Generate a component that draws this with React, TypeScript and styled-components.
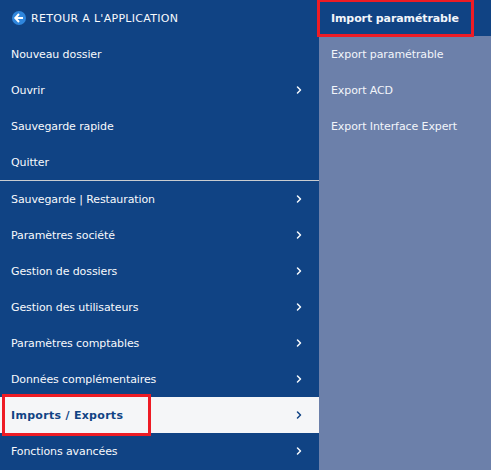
import styled, { createGlobalStyle } from "styled-components";
import { ChevronRight } from "lucide-react";

const GlobalStyle = createGlobalStyle`
    html, body {
        margin: 0;
        padding: 0;
        height: 100%;
        overflow: hidden;
    }
`;

const Page = styled.div`
    display: flex;
    width: 491px;
    height: 470px;
    overflow: hidden;
    font-family: "DejaVu Sans", Verdana, sans-serif;
    font-size: 11px;
    letter-spacing: -0.1px;
`;

const MainMenu = styled.ul`
    width: 319px;
    flex-shrink: 0;
    margin: 0;
    padding: 0;
    list-style: none;
    background: #104384;
`;

const SubMenu = styled.ul`
    flex: 1;
    margin: 0;
    padding: 0;
    list-style: none;
    background: #6c80aa;
`;

const Row = styled.li<{ $active?: boolean; $divider?: boolean }>`
    display: flex;
    align-items: center;
    justify-content: space-between;
    height: 36px;
    padding: 0 14px 0 11px;
    color: ${props => (props.$active ? "#104384" : "#f7f9fc")};
    background: ${props => (props.$active ? "#f5f6f8" : "transparent")};
    font-weight: ${props => (props.$active ? 700 : 400)};
    letter-spacing: ${props => (props.$active ? "0.3px" : "inherit")};
    border-bottom: ${props => (props.$divider ? "1px solid #c9ccd0" : "none")};
`;

const SubRow = styled.li<{ $current?: boolean }>`
    display: flex;
    align-items: center;
    height: 36px;
    padding-left: 12px;
    color: #f2f5fa;
    background: ${props => (props.$current ? "#104384" : "transparent")};
    font-weight: ${props => (props.$current ? 700 : 400)};
`;

const BackLabel = styled.span`
    display: flex;
    align-items: center;
    gap: 5px;
    margin-left: 1px;
    letter-spacing: 0.3px;
`;

const Highlight = styled.div<{ $left: number; $top: number; $width: number; $height: number }>`
    position: absolute;
    left: ${props => props.$left}px;
    top: ${props => props.$top}px;
    width: ${props => props.$width}px;
    height: ${props => props.$height}px;
    box-sizing: border-box;
    border: 3px solid #ee1c25;
`;

const BackIcon = () => (
    <svg width="14" height="14" viewBox="0 0 14 14">
        <circle cx="7" cy="7" r="7" fill="#2f86dc" />
        <path d="M7 3 L3.3 7 L7 11 M3.5 7 H11" fill="none" stroke="#fff" strokeWidth="2" />
    </svg>
);

const mainItems = [
    { label: "Nouveau dossier" },
    { label: "Ouvrir", arrow: true },
    { label: "Sauvegarde rapide" },
    { label: "Quitter", divider: true },
    { label: "Sauvegarde | Restauration", arrow: true },
    { label: "Paramètres société", arrow: true },
    { label: "Gestion de dossiers", arrow: true },
    { label: "Gestion des utilisateurs", arrow: true },
    { label: "Paramètres comptables", arrow: true },
    { label: "Données complémentaires", arrow: true },
    { label: "Imports / Exports", arrow: true, active: true },
    { label: "Fonctions avancées", arrow: true },
];

const subItems = ["Import paramétrable", "Export paramétrable", "Export ACD", "Export Interface Expert"];

const App: React.FC = () => {
    return (
        <Page>
            <GlobalStyle />
            <MainMenu>
                <Row>
                    <BackLabel>
                        <BackIcon />
                        RETOUR A L'APPLICATION
                    </BackLabel>
                </Row>
                {mainItems.map(item => (
                    <Row key={item.label} $active={item.active} $divider={item.divider}>
                        {item.label}
                        {item.arrow && <ChevronRight size={12} strokeWidth={3} />}
                    </Row>
                ))}
            </MainMenu>
            <SubMenu>
                {subItems.map((item, index) => (
                    <SubRow key={item} $current={index === 0}>
                        {item}
                    </SubRow>
                ))}
            </SubMenu>
            <Highlight $left={2} $top={394} $width={149} $height={42} />
            <Highlight $left={317} $top={-1} $width={157} $height={38} />
        </Page>
    );
};

export default App;
